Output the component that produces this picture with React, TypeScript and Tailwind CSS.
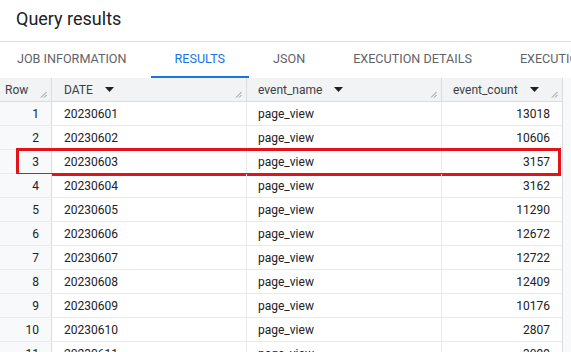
const rows = [
  { n: 1, date: '20230601', name: 'page_view', count: 13018 },
  { n: 2, date: '20230602', name: 'page_view', count: 10606 },
  { n: 3, date: '20230603', name: 'page_view', count: 3157 },
  { n: 4, date: '20230604', name: 'page_view', count: 3162 },
  { n: 5, date: '20230605', name: 'page_view', count: 11290 },
  { n: 6, date: '20230606', name: 'page_view', count: 12672 },
  { n: 7, date: '20230607', name: 'page_view', count: 12722 },
  { n: 8, date: '20230608', name: 'page_view', count: 12409 },
  { n: 9, date: '20230609', name: 'page_view', count: 10176 },
  { n: 10, date: '20230610', name: 'page_view', count: 2807 },
  { n: 11, date: '20230611', name: 'page_view', count: 3099 },
];

const tabs = ['JOB INFORMATION', 'RESULTS', 'JSON', 'EXECUTION DETAILS', 'EXECUTION GRAPH'];

function SortArrow() {
  return (
    <svg width="9" height="5" viewBox="0 0 9 5" className="ml-3 shrink-0">
      <path d="M0 0h9L4.5 5z" fill="#202124" />
    </svg>
  );
}

function Grip() {
  return (
    <svg width="7" height="7" viewBox="0 0 7 7" className="absolute right-[4px] bottom-[3px]">
      <path d="M1 6.5L6.5 1M4 6.5L6.5 4" stroke="#80868b" strokeWidth="0.9" />
    </svg>
  );
}

export default function App() {
  return (
    <div className="w-[571px] h-[352px] overflow-hidden bg-white font-['Roboto',sans-serif] text-[#3c4043]">
      <div className="h-[42px] flex items-center pl-4 pb-1 border-b border-[#dadce0]">
        <h1 className="text-[18px] text-[#202124]">Query results</h1>
      </div>

      <div className="h-[36px] flex whitespace-nowrap -ml-[7px]">
        {tabs.map((t) => (
          <div
            key={t}
            className={
              'px-6 flex items-center text-[12.6px] border-b-2 ' +
              (t === 'RESULTS' ? 'text-[#1a73e8] border-[#1a73e8]' : 'text-[#5f6368] border-transparent')
            }
          >
            {t}
          </div>
        ))}
      </div>

      <div className="flex">
        <div className="w-[562px] shrink-0">
          <div className="flex h-[24px] bg-[#f1f3f4] border-b border-[#dadce0] text-[12px] text-[#3c4043]">
            <div className="relative w-[52px] pl-[5px] flex items-center border-r border-[#dadce0]">
              Row
              <Grip />
            </div>
            <div className="relative w-[195px] pl-3 flex items-center border-r border-[#dadce0]">
              DATE
              <SortArrow />
              <Grip />
            </div>
            <div className="relative w-[195px] pl-[11px] flex items-center border-r border-[#dadce0]">
              event_name
              <SortArrow />
              <Grip />
            </div>
            <div className="relative flex-1 pl-[11px] flex items-center">
              event_count
              <SortArrow />
              <Grip />
            </div>
          </div>

          {rows.map((r) => (
            <div key={r.n} className="relative flex h-[24px] border-b border-[#e8eaed] text-[12px] text-[#202124]">
              <div className="w-[52px] bg-[#f8f9fa] pr-3 flex items-center justify-end border-r border-[#dadce0]">
                {r.n}
              </div>
              <div className="w-[195px] pl-3 flex items-center border-r border-[#e8eaed]">{r.date}</div>
              <div className="w-[195px] pl-[11px] flex items-center border-r border-[#e8eaed]">{r.name}</div>
              <div className="flex-1 pr-3 flex items-center justify-end">{r.count}</div>
              {r.n === 3 && (
                <div className="absolute left-[16px] right-[1px] -top-[2px] -bottom-[3px] border-[3px] border-[#e3131b]" />
              )}
            </div>
          ))}
        </div>
        <div className="flex-1 bg-[#f8f9fa] border-l border-[#dadce0]" />
      </div>
    </div>
  );
}
